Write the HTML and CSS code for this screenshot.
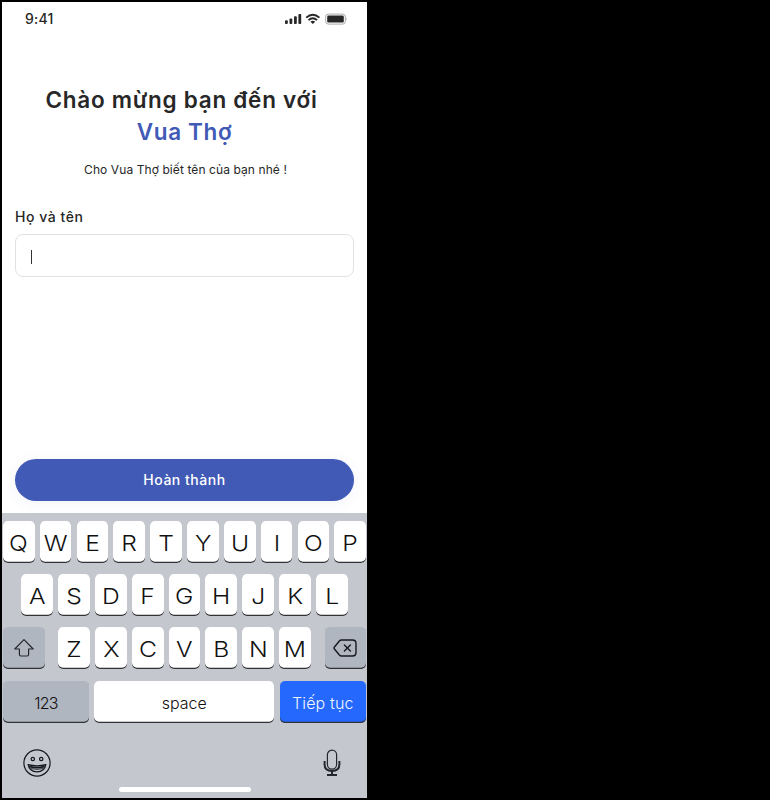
FILE: index.html
```html
<!DOCTYPE html>
<html lang="vi">
<head>
<meta charset="utf-8">
<title>Vua Thợ</title>
<link rel="stylesheet" href="styles.css">
</head>
<body>
<main class="phone">
  <header class="status">
    <span class="time">9:41</span>
    <svg class="indicators" width="64" height="14" viewBox="0 0 64 14">
      <g fill="#272727">
        <rect x="0" y="8.3" width="2.8" height="3.7" rx=".9"/>
        <rect x="4.5" y="6.5" width="2.8" height="5.5" rx=".9"/>
        <rect x="9" y="4.3" width="2.8" height="7.7" rx=".9"/>
        <rect x="13.4" y="2" width="2.8" height="10" rx=".9"/>
        <path d="M25.4 9.7Q27.8 7.9 30.2 9.7L27.8 12.1Z"/>
        <rect x="42.2" y="3.6" width="16.6" height="7" rx="1.3"/>
      </g>
      <g fill="none" stroke="#272727" stroke-width="1.9">
        <path d="M21.2 5.6Q27.8 -.1 34.4 5.6"/>
        <path d="M23.5 8.1Q27.8 4.4 32.1 8.1"/>
      </g>
      <rect x="40.7" y="2.1" width="19.6" height="10" rx="2.6" fill="none" stroke="#a9a9a9"/>
      <path d="M61.3 5.5v3.2q1.5-1.6 0-3.2" fill="#a9a9a9"/>
    </svg>
  </header>
  <section class="welcome">
    <h1><span class="greeting">Chào mừng bạn đến với</span><span class="brand">Vua Thợ</span></h1>
    <p class="prompt"><span>Cho Vua Thợ biết tên của bạn nhé !</span></p>
    <div class="label"><span>Họ và tên</span></div>
    <div class="field"><i class="caret"></i></div>
  </section>
  <button class="submit">Hoàn thành</button>
  <section class="keyboard">
    <div class="row">
      <b class="key"><i>Q</i></b><b class="key"><i>W</i></b><b class="key"><i>E</i></b><b class="key"><i>R</i></b><b class="key"><i>T</i></b><b class="key"><i>Y</i></b><b class="key"><i>U</i></b><b class="key"><i>I</i></b><b class="key"><i>O</i></b><b class="key"><i>P</i></b>
    </div>
    <div class="row">
      <b class="key"><i>A</i></b><b class="key"><i>S</i></b><b class="key"><i>D</i></b><b class="key"><i>F</i></b><b class="key"><i>G</i></b><b class="key"><i>H</i></b><b class="key"><i>J</i></b><b class="key"><i>K</i></b><b class="key"><i>L</i></b>
    </div>
    <div class="row spread">
      <b class="key gray side">
        <svg width="22" height="20" viewBox="0 0 22 20" fill="none" stroke="#25282e" stroke-width="1.2" stroke-linejoin="round"><path d="M11 1.6L20.2 11H15.6V16.5Q15.6 18 14.1 18H7.9Q6.4 18 6.4 16.5V11H1.8Z"/></svg>
      </b>
      <span class="letters"><b class="key"><i>Z</i></b><b class="key"><i>X</i></b><b class="key"><i>C</i></b><b class="key"><i>V</i></b><b class="key"><i>B</i></b><b class="key"><i>N</i></b><b class="key"><i>M</i></b></span>
      <b class="key gray side">
        <svg width="24" height="18" viewBox="0 0 24 18" fill="none" stroke="#15181d" stroke-width="1.4" stroke-linecap="round" stroke-linejoin="round"><path d="M8.3 1H19.5Q23 1 23 4.5V13.5Q23 17 19.5 17H8.3Q7.3 17 6.4 16L1.4 10Q.6 9 1.4 8L6.4 2Q7.3 1 8.3 1ZM11.4 6l6 6M17.4 6l-6 6"/></svg>
      </b>
    </div>
    <div class="row wide">
      <b class="key gray num">123</b><b class="key space">space</b><b class="key next">Tiếp tục</b>
    </div>
    <div class="tools">
      <svg width="28" height="28" viewBox="0 0 28 28" fill="none" stroke="#15181d" stroke-width="1.2">
        <circle cx="14" cy="14" r="13.1"/><circle cx="9.8" cy="10" r="1.7"/><circle cx="18.2" cy="10" r="1.7"/>
        <path d="M5.2 15.7Q14 18 22.8 15.7Q21.7 22.8 14 22.8T5.2 15.7Z"/><path d="M6.3 17.3Q14 20 21.7 17.3" stroke-width="1.8"/><path d="M8 19.6Q14 21.2 20 19.6" stroke-width=".8"/>
      </svg>
      <svg class="mic" width="18" height="28" viewBox="0 0 18 28" fill="none" stroke="#24272c" stroke-width="1.2">
        <rect x="4.4" y="1.2" width="9.2" height="19" rx="4.6"/>
        <path d="M1.6 12v3.6Q1.6 22 9 22T16.4 15.6V12" stroke-width="2"/><path d="M9 22v4M4 26h10" stroke-width="2"/>
      </svg>
    </div>
    <div class="home"></div>
  </section>
</main>
</body>
</html>
```
FILE: styles.css
```css
* { box-sizing: border-box; }
body { margin: 0; height: 800px; padding: 2px; background: #000; overflow: hidden; font-family: Inter, "Noto Sans", sans-serif; color: #272727; }
.phone { width: 365px; height: 796px; background: #fff; display: flex; flex-direction: column; }
.status { height: 34px; padding: 0 20px 0 23px; display: flex; align-items: center; justify-content: space-between; }
.time { font-size: 14px; font-weight: 500; line-height: 20px; letter-spacing: .2px; }
.indicators { margin-right: -2px; }
.welcome { height: 423px; padding: 48px 13px 0; }
h1 { margin: 0; font-size: 22.5px; line-height: 32px; font-weight: 600; text-align: center; white-space: nowrap; }
h1 span { display: block; }
.greeting { letter-spacing: .74px; margin-left: -6px; }
.brand { color: #405ab6; letter-spacing: .65px; }
.prompt { margin: 12px 0 0; font-size: 12px; line-height: 20px; text-align: center; white-space: nowrap; padding-left: 2px; letter-spacing: .09px; }
.label { margin-top: 26px; font-size: 14px; line-height: 22px; font-weight: 500; white-space: nowrap; letter-spacing: .55px; }
.field { margin-top: 6px; height: 43px; border: 1px solid #e2e2e4; border-radius: 8px; padding: 15px 15px; }
.caret { display: block; width: 1px; height: 14px; background: #333; }
.submit { margin: 0 13px; height: 41.5px; flex: none; border: 0; border-radius: 21px; background: #405ab6; color: #fff; font: 500 14px Inter, sans-serif; box-shadow: 0 2px 14px #405ab612; letter-spacing: .52px; }
.keyboard { margin-top: 12.5px; flex: 1; background: #c4c7cd; padding: 7.5px 1px 0; display: flex; flex-direction: column; }
.row { display: flex; justify-content: center; gap: 5.15px; height: 42px; margin-bottom: 11.4px; flex: none; }
.spread { justify-content: space-between; gap: 0; }
.letters { display: flex; gap: 5.15px; }
.key { width: 31.7px; height: 42px; flex: none; display: flex; align-items: center; justify-content: center; border-radius: 5px; background: #fff; box-shadow: inset 0 -1.2px #303236; color: #101010; font-size: 22px; font-weight: 300; line-height: 1; padding-top: 2px; }
.key i { font-style: normal; transform: scaleX(1.12); }
.gray { background: #b0b6c0; }
.side { width: 41.5px; padding: 0; }
.wide .key { font-size: 16px; }
.wide .num { width: 86px; letter-spacing: -.8px; }
.wide .space { flex: 1; }
.wide .next { width: 86.5px; background: #2468fd; color: #f2f6ff; letter-spacing: .15px; }
.tools { display: flex; justify-content: space-between; align-items: center; height: 28px; margin: 14.5px 25px 0 20px; }
.home { width: 132px; height: 5px; border-radius: 3px; background: #fff; margin: 10.5px auto 0; }
```
